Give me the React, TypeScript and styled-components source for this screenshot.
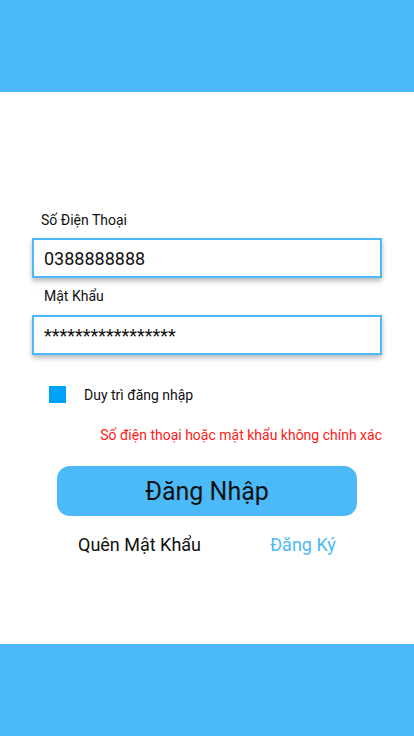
import React from 'react';
import styled, { createGlobalStyle } from 'styled-components';

const BLUE = '#4cb9f8';

const GlobalStyle = createGlobalStyle`
  html, body {
    margin: 0;
    padding: 0;
    background: #fff;
    font-family: Roboto, "Noto Sans", sans-serif;
  }
`;

const Page = styled.div({
  width: 414,
  height: 736,
  display: 'flex',
  flexDirection: 'column',
});

const Bar = styled.div({
  height: 92,
  flexShrink: 0,
  background: BLUE,
});

const Main = styled.main({
  flex: 1,
  display: 'flex',
  flexDirection: 'column',
  padding: '118px 32px 0',
});

const Label = styled.label<{ $indent: number; $gap: number }>(({ $indent, $gap }) => ({
  display: 'block',
  fontSize: 14,
  lineHeight: '20px',
  color: '#111',
  paddingLeft: $indent,
  marginBottom: $gap,
}));

const Field = styled.input<{ $size: number }>(({ $size }) => ({
  boxSizing: 'border-box',
  width: 350,
  height: 40,
  margin: 0,
  padding: '0 10px',
  border: `2px solid ${BLUE}`,
  borderRadius: 0,
  outline: 'none',
  background: '#fff',
  boxShadow: '0 3px 5px rgba(0, 0, 0, 0.28)',
  fontFamily: 'Roboto, sans-serif',
  fontSize: $size,
  color: '#111',
  marginBottom: 8,
}));

const RememberRow = styled.div({
  display: 'flex',
  alignItems: 'center',
  gap: 18,
  marginTop: 23,
  paddingLeft: 17,
  fontSize: 14,
  color: '#111',
});

const Check = styled.span({
  width: 17,
  height: 17,
  background: '#00a2f7',
});

const ErrorText = styled.div({
  marginTop: 22,
  textAlign: 'right',
  fontSize: 14,
  lineHeight: '20px',
  color: '#ff1a1a',
});

const LoginButton = styled.button({
  alignSelf: 'flex-start',
  marginTop: 21,
  marginLeft: 25,
  width: 300,
  height: 50,
  border: 'none',
  borderRadius: 13,
  background: BLUE,
  color: '#111',
  fontFamily: 'Roboto, sans-serif',
  fontSize: 25,
  cursor: 'pointer',
});

const Links = styled.div({
  display: 'flex',
  gap: 69,
  marginTop: 17,
  paddingLeft: 46,
  fontSize: 18,
  lineHeight: '24px',
});

const LinkText = styled.a<{ $accent?: boolean }>(({ $accent }) => ({
  color: $accent ? BLUE : '#111',
  textDecoration: 'none',
}));

export default function App() {
  return (
    <Page>
      <GlobalStyle />
      <Bar />
      <Main>
        <Label $indent={9} $gap={8}>Số Điện Thoại</Label>
        <Field $size={18} defaultValue="0388888888" />
        <Label $indent={12} $gap={9}>Mật Khẩu</Label>
        <Field $size={18} defaultValue="*****************" />
        <RememberRow>
          <Check />
          <span>Duy trì đăng nhập</span>
        </RememberRow>
        <ErrorText>Số điện thoại hoặc mật khẩu không chính xác</ErrorText>
        <LoginButton>Đăng Nhập</LoginButton>
        <Links>
          <LinkText>Quên Mật Khẩu</LinkText>
          <LinkText $accent>Đăng Ký</LinkText>
        </Links>
      </Main>
      <Bar />
    </Page>
  );
}
